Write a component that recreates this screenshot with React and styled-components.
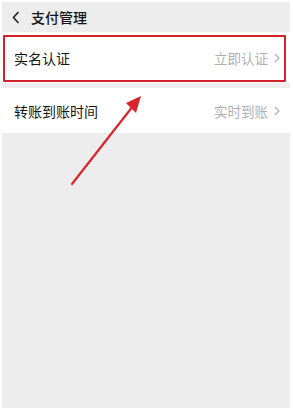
import React from "react";
import styled, { createGlobalStyle } from "styled-components";

const GlobalStyle = createGlobalStyle`
  html, body {
    margin: 0;
    padding: 0;
    background: #ffffff;
  }
  body {
    font-family: "Noto Sans CJK SC", "Noto Sans", sans-serif;
  }
`;

const Frame = styled.div`
  padding: 2px 3px 2px 2px;
  width: 293px;
  height: 410px;
  box-sizing: border-box;
`;

const Screen = styled.div`
  position: relative;
  height: 100%;
  background: #ededed;
  display: flex;
  flex-direction: column;
  overflow: hidden;
`;

const Header = styled.div`
  height: 30px;
  display: flex;
  align-items: center;
  padding-left: 10px;
  gap: 11px;
  color: #161616;
  font-size: 14px;
  font-weight: 500;
`;

const Row = styled.div`
  position: relative;
  height: ${(p) => p.h}px;
  margin-top: ${(p) => p.gap}px;
  background: #ffffff;
  display: flex;
  align-items: center;
  justify-content: space-between;
  padding: 0 10px 0 12px;
`;

const Label = styled.span`
  font-size: 14px;
  color: #161616;
`;

const Value = styled.span`
  display: flex;
  align-items: center;
  gap: 6px;
  font-size: 13.5px;
  color: #b0b0b0;
`;

const Highlight = styled.div`
  position: absolute;
  left: 1px;
  right: 4px;
  top: 3px;
  bottom: 1px;
  border: 2px solid #d1222b;
  border-radius: 1px;
`;

const Arrow = styled.svg`
  position: absolute;
  left: 0;
  top: 0;
  pointer-events: none;
`;

const Chevron = () => (
  <svg width="6" height="10" viewBox="0 0 6 10">
    <path d="M0.8 1 L5 5 L0.8 9" fill="none" stroke="#b0b0b0" strokeWidth="1.2" />
  </svg>
);

export default function App() {
  return (
    <>
      <GlobalStyle />
      <Frame>
        <Screen>
          <Header>
            <svg width="8" height="13" viewBox="0 0 8 13">
              <path d="M6.5 1 L1.5 6.5 L6.5 12" fill="none" stroke="#222" strokeWidth="1.6" />
            </svg>
            <span>支付管理</span>
          </Header>
          <Row h={51} gap={0}>
            <Label>实名认证</Label>
            <Value>
              立即认证
              <Chevron />
            </Value>
            <Highlight />
          </Row>
          <Row h={45} gap={5}>
            <Label>转账到账时间</Label>
            <Value>
              实时到账
              <Chevron />
            </Value>
          </Row>
          <Arrow width="288" height="406" viewBox="0 0 288 406">
            <line x1="70" y1="182" x2="131" y2="104" stroke="#d9252c" strokeWidth="2.2" strokeLinecap="round" />
            <polygon points="139,94 124,101 134,111" fill="#d9252c" />
          </Arrow>
        </Screen>
      </Frame>
    </>
  );
}
